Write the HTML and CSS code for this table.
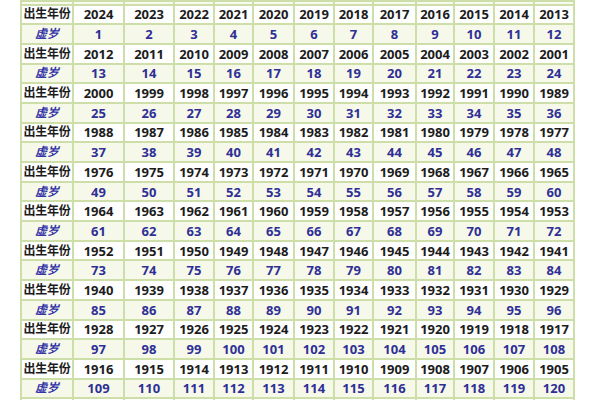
FILE: index.html
```html
<!DOCTYPE html>
<html lang="zh">
<head>
<meta charset="utf-8">
<link rel="stylesheet" href="styles.css">
</head>
<body>
<table class="age-table">
<colgroup>
<col class="c-label"><col class="c1"><col class="c2"><col class="c3"><col class="c4"><col class="c5"><col class="c6"><col class="c7"><col class="c8"><col class="c9"><col class="c10"><col class="c11"><col class="c12">
</colgroup>
<tbody>
<tr class="cut"><td></td><td></td><td></td><td></td><td></td><td></td><td></td><td></td><td></td><td></td><td></td><td></td><td></td></tr>
<tr class="year"><th>出生年份</th><td>2024</td><td>2023</td><td>2022</td><td>2021</td><td>2020</td><td>2019</td><td>2018</td><td>2017</td><td>2016</td><td>2015</td><td>2014</td><td>2013</td></tr>
<tr class="age"><th>虚岁</th><td>1</td><td>2</td><td>3</td><td>4</td><td>5</td><td>6</td><td>7</td><td>8</td><td>9</td><td>10</td><td>11</td><td>12</td></tr>
<tr class="year"><th>出生年份</th><td>2012</td><td>2011</td><td>2010</td><td>2009</td><td>2008</td><td>2007</td><td>2006</td><td>2005</td><td>2004</td><td>2003</td><td>2002</td><td>2001</td></tr>
<tr class="age"><th>虚岁</th><td>13</td><td>14</td><td>15</td><td>16</td><td>17</td><td>18</td><td>19</td><td>20</td><td>21</td><td>22</td><td>23</td><td>24</td></tr>
<tr class="year"><th>出生年份</th><td>2000</td><td>1999</td><td>1998</td><td>1997</td><td>1996</td><td>1995</td><td>1994</td><td>1993</td><td>1992</td><td>1991</td><td>1990</td><td>1989</td></tr>
<tr class="age"><th>虚岁</th><td>25</td><td>26</td><td>27</td><td>28</td><td>29</td><td>30</td><td>31</td><td>32</td><td>33</td><td>34</td><td>35</td><td>36</td></tr>
<tr class="year"><th>出生年份</th><td>1988</td><td>1987</td><td>1986</td><td>1985</td><td>1984</td><td>1983</td><td>1982</td><td>1981</td><td>1980</td><td>1979</td><td>1978</td><td>1977</td></tr>
<tr class="age"><th>虚岁</th><td>37</td><td>38</td><td>39</td><td>40</td><td>41</td><td>42</td><td>43</td><td>44</td><td>45</td><td>46</td><td>47</td><td>48</td></tr>
<tr class="year"><th>出生年份</th><td>1976</td><td>1975</td><td>1974</td><td>1973</td><td>1972</td><td>1971</td><td>1970</td><td>1969</td><td>1968</td><td>1967</td><td>1966</td><td>1965</td></tr>
<tr class="age"><th>虚岁</th><td>49</td><td>50</td><td>51</td><td>52</td><td>53</td><td>54</td><td>55</td><td>56</td><td>57</td><td>58</td><td>59</td><td>60</td></tr>
<tr class="year"><th>出生年份</th><td>1964</td><td>1963</td><td>1962</td><td>1961</td><td>1960</td><td>1959</td><td>1958</td><td>1957</td><td>1956</td><td>1955</td><td>1954</td><td>1953</td></tr>
<tr class="age"><th>虚岁</th><td>61</td><td>62</td><td>63</td><td>64</td><td>65</td><td>66</td><td>67</td><td>68</td><td>69</td><td>70</td><td>71</td><td>72</td></tr>
<tr class="year"><th>出生年份</th><td>1952</td><td>1951</td><td>1950</td><td>1949</td><td>1948</td><td>1947</td><td>1946</td><td>1945</td><td>1944</td><td>1943</td><td>1942</td><td>1941</td></tr>
<tr class="age"><th>虚岁</th><td>73</td><td>74</td><td>75</td><td>76</td><td>77</td><td>78</td><td>79</td><td>80</td><td>81</td><td>82</td><td>83</td><td>84</td></tr>
<tr class="year"><th>出生年份</th><td>1940</td><td>1939</td><td>1938</td><td>1937</td><td>1936</td><td>1935</td><td>1934</td><td>1933</td><td>1932</td><td>1931</td><td>1930</td><td>1929</td></tr>
<tr class="age"><th>虚岁</th><td>85</td><td>86</td><td>87</td><td>88</td><td>89</td><td>90</td><td>91</td><td>92</td><td>93</td><td>94</td><td>95</td><td>96</td></tr>
<tr class="year"><th>出生年份</th><td>1928</td><td>1927</td><td>1926</td><td>1925</td><td>1924</td><td>1923</td><td>1922</td><td>1921</td><td>1920</td><td>1919</td><td>1918</td><td>1917</td></tr>
<tr class="age"><th>虚岁</th><td>97</td><td>98</td><td>99</td><td>100</td><td>101</td><td>102</td><td>103</td><td>104</td><td>105</td><td>106</td><td>107</td><td>108</td></tr>
<tr class="year"><th>出生年份</th><td>1916</td><td>1915</td><td>1914</td><td>1913</td><td>1912</td><td>1911</td><td>1910</td><td>1909</td><td>1908</td><td>1907</td><td>1906</td><td>1905</td></tr>
<tr class="age"><th>虚岁</th><td>109</td><td>110</td><td>111</td><td>112</td><td>113</td><td>114</td><td>115</td><td>116</td><td>117</td><td>118</td><td>119</td><td>120</td></tr>
<tr class="cut-bottom"><td></td><td></td><td></td><td></td><td></td><td></td><td></td><td></td><td></td><td></td><td></td><td></td><td></td></tr>
</tbody>
</table>
</body>
</html>
```

FILE: styles.css
```css
html, body {
  margin: 0;
  padding: 0;
  background: #ffffff;
  overflow: hidden;
}

.age-table {
  margin-left: 20px;
  width: 553px;
  table-layout: fixed;
  border-collapse: collapse;
  font-family: "Noto Sans", "Noto Sans CJK SC", sans-serif;
  font-weight: 700;
  font-size: 13px;
}

.c-label { width: 52px; }
.c1 { width: 51px; }
.c2 { width: 50px; }
.c3 { width: 40px; }
.c4 { width: 39px; }
.c5 { width: 41px; }
.c6 { width: 40px; }
.c7 { width: 39px; }
.c8 { width: 43px; }
.c9 { width: 38px; }
.c10 { width: 40px; }
.c11 { width: 40px; }
.c12 { width: 40px; }

.age-table th,
.age-table td {
  border: 2px solid #cddea8;
  padding: 0;
  text-align: center;
  line-height: 16px;
  white-space: nowrap;
  overflow: hidden;
}

.age-table tr {
  height: 19.7px;
}

.age-table tr.cut {
  height: 3.5px;
}

.age-table tr.cut td {
  line-height: 0;
  background: #f7faee;
}

.age-table tr.cut-bottom td {
  background: #ffffff;
}

.year th,
.year td {
  color: #1c1c1c;
  background: #ffffff;
}

.year th {
  font-size: 12px;
  letter-spacing: -0.2px;
}

.age th,
.age td {
  color: #2f2f96;
  background: #f6f9ea;
}

.age th {
  font-size: 12px;
  font-style: italic;
  color: #3434a6;
}
```
